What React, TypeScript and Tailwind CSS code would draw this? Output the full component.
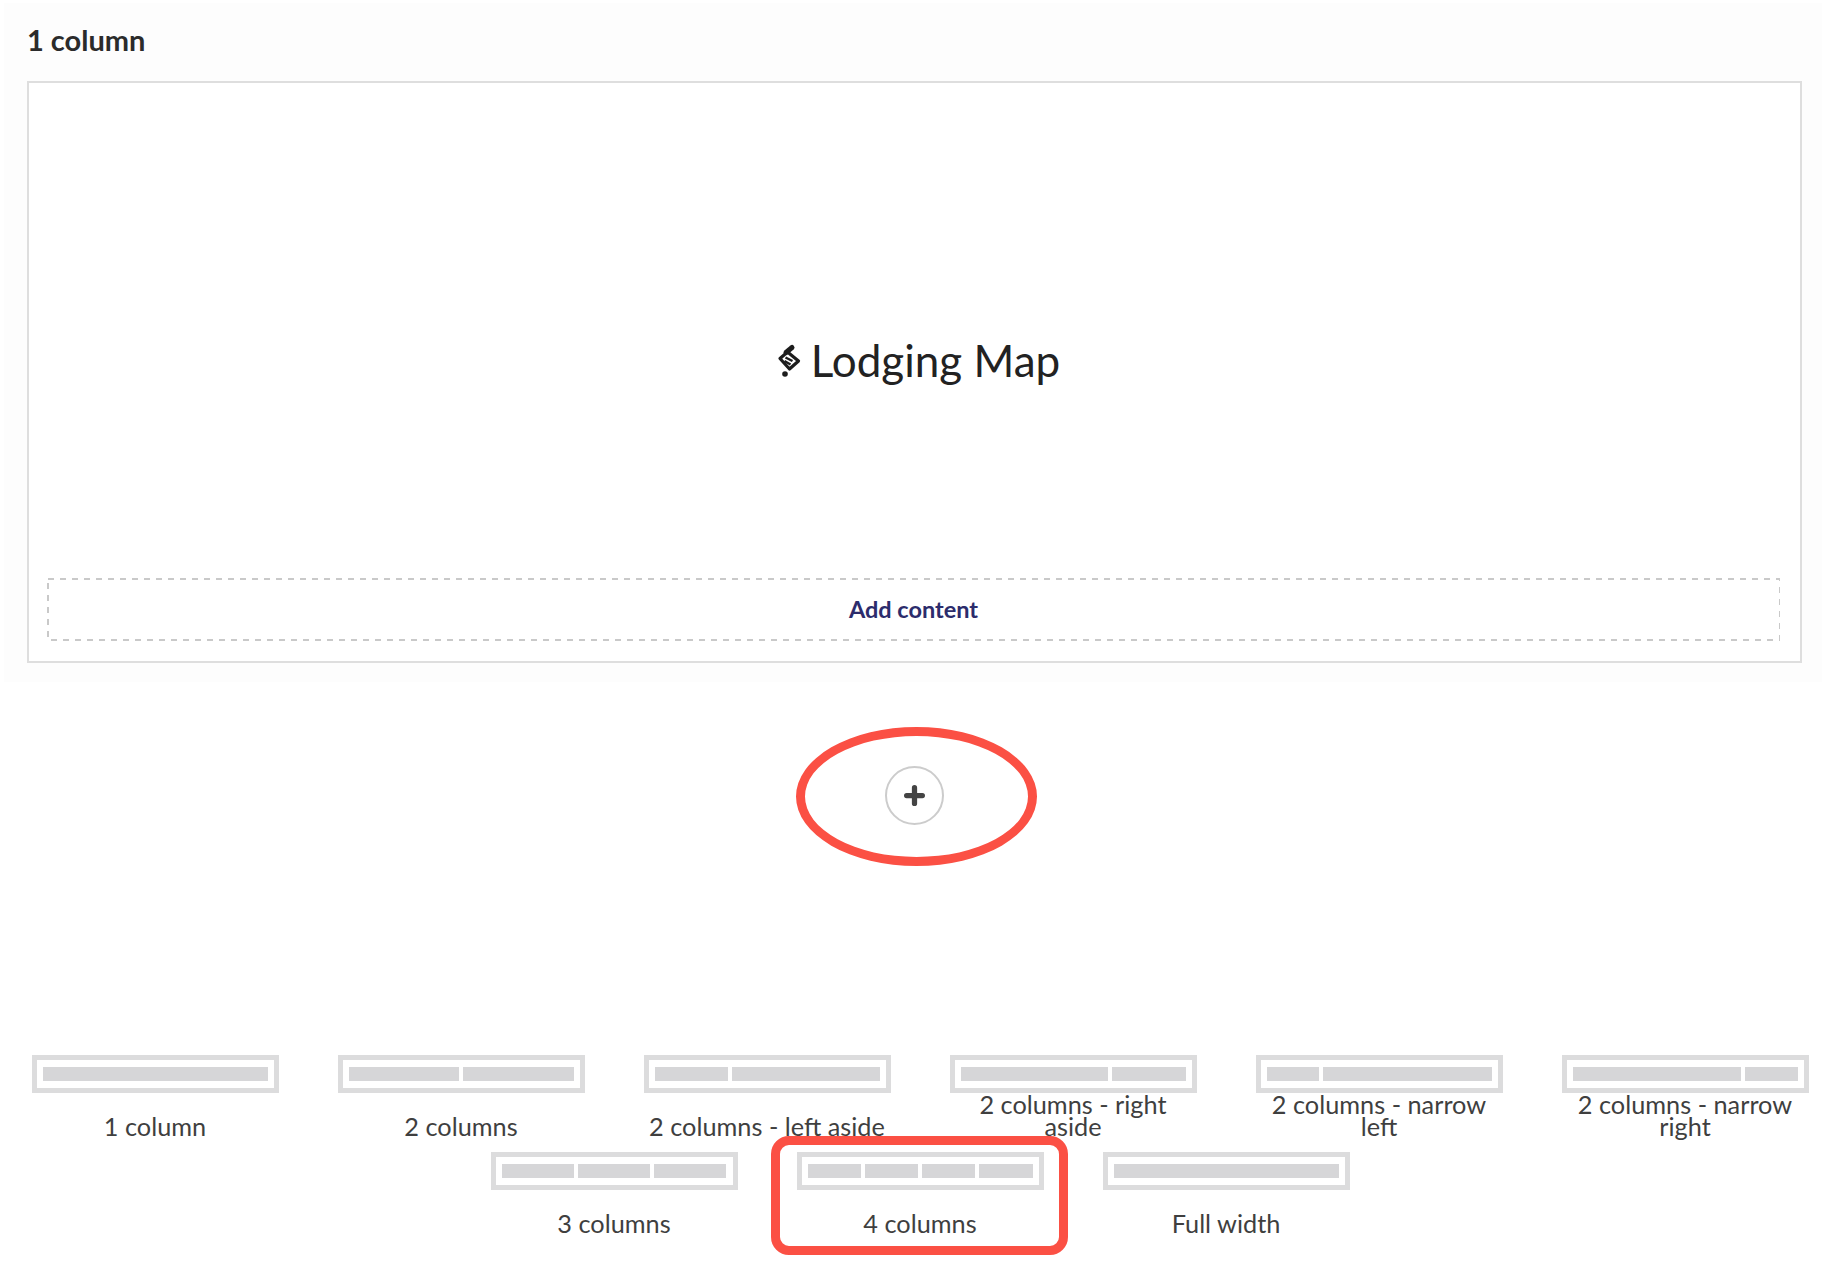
const layouts: { label: string; bars: number[] }[][] = [
  [
    { label: '1 column', bars: [1] },
    { label: '2 columns', bars: [1, 1] },
    { label: '2 columns - left aside', bars: [1, 2] },
    { label: '2 columns - right aside', bars: [2, 1] },
    { label: '2 columns - narrow left', bars: [1, 3.2] },
    { label: '2 columns - narrow right', bars: [3.2, 1] },
  ],
  [
    { label: '3 columns', bars: [1, 1, 1] },
    { label: '4 columns', bars: [1, 1, 1, 1] },
    { label: 'Full width', bars: [1] },
  ],
]

function LayoutOption({ label, bars }: { label: string; bars: number[] }) {
  return (
    <div className="w-[247px] flex flex-col items-center">
      <div className="w-full h-[38px] border-[5px] border-[#dcdcdd] px-[6px] py-[7px] flex gap-[4px]">
        {bars.map((grow, i) => (
          <div key={i} className="h-full bg-[#d6d6d8]" style={{ flexGrow: grow, flexBasis: 0 }} />
        ))}
      </div>
      <div className="h-[44px] w-full flex items-end justify-center text-center text-[25.3px] leading-[22px] text-[#3f3f3f]">
        <span className="block">{label}</span>
      </div>
    </div>
  )
}

export default function App() {
  return (
    <div className="relative w-[1822px] h-[1282px] overflow-hidden bg-white font-['Lato','Open_Sans',sans-serif]">
      <div className="ml-[4px] mt-[3px] w-[1818px] h-[679px] bg-[#fdfdfd] pl-[23px] pr-[20px] pt-[17px]">
        <h2 className="text-[29px] leading-[40px] font-bold text-[#2b2b2b]">1 column</h2>
        <div className="mt-[21px] h-[582px] border-2 border-[#dedede] bg-white flex flex-col pl-[18px] pr-[20px] pb-[20px]">
          <div className="flex-1 flex items-center justify-center pl-[10px] pt-[59px] text-[#222222]">
            <svg viewBox="0 0 25 34" className="w-[25px] h-[34px] mr-[9px]" fill="none" stroke="#1c1c1c">
              <path d="M9 9.5 L15 4.5" strokeWidth="5" strokeLinecap="round" />
              <path d="M3 15.5 L10.5 9 L21.5 18 L12.5 26 Z" strokeWidth="3.2" strokeLinejoin="round" />
              <path d="M8.5 14.5 L15.5 18 M7.5 18 L13.5 21.5" strokeWidth="2.4" />
              <circle cx="8" cy="31" r="2.8" fill="#1c1c1c" stroke="none" />
            </svg>
            <span className="text-[44px] leading-none">Lodging Map</span>
          </div>
          <div className="relative h-[63px] flex items-center justify-center text-[23.5px] font-bold text-[#2c2c6c]">
            <svg className="absolute inset-0 w-full h-full" fill="none">
              <rect x="1" y="1" width="1732" height="61" stroke="#c9c9c9" strokeWidth="2" strokeDasharray="6 6" />
            </svg>
            Add content
          </div>
        </div>
      </div>

      <div className="mt-[84px] flex justify-center pl-[7px]">
        <div className="w-[59px] h-[59px] rounded-full border-2 border-[#cccccc] flex items-center justify-center">
          <svg viewBox="0 0 20 20" className="w-[21px] h-[21px]" stroke="#444444" strokeWidth="5" strokeLinecap="round">
            <path d="M10 2.5 V17.5 M2.5 10 H17.5" />
          </svg>
        </div>
      </div>

      <div className="mt-[230px] ml-[31px] w-[1778px] flex flex-col gap-[14.5px]">
        {layouts.map((row, i) => (
          <div key={i} className="flex justify-center gap-x-[59px]">
            {row.map(o => (
              <LayoutOption key={o.label} {...o} />
            ))}
          </div>
        ))}
      </div>

      <div className="absolute left-[796px] top-[727px] w-[241px] h-[139px] rounded-[50%] border-[9px] border-[#fb5044]" />
      <div className="absolute left-[771px] top-[1136px] w-[297px] h-[119px] rounded-[18px] border-[9px] border-[#fb5044]" />
    </div>
  )
}
